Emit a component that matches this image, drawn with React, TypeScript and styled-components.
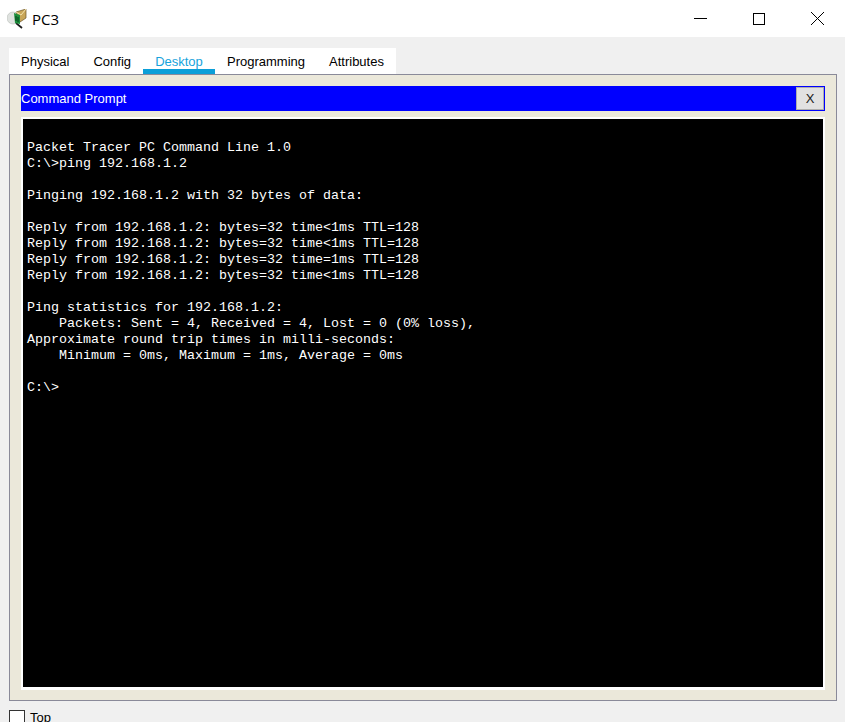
import { createGlobalStyle } from "styled-components";
import styled from "styled-components";

const Global = createGlobalStyle`
  html, body {
    margin: 0;
    padding: 0;
    height: 722px;
    overflow: hidden;
    background: #f0f0f0;
    font-family: "Liberation Sans", Arial, sans-serif;
  }
`;

const Window = styled.div`
  width: 845px;
  height: 722px;
  display: flex;
  flex-direction: column;
  overflow: hidden;
`;

const TitleBar = styled.div`
  height: 37px;
  background: #fff;
  display: flex;
  align-items: center;
  flex-shrink: 0;
  padding-left: 7px;
`;

const TitleText = styled.span`
  font-family: "Open Sans", "Noto Sans", sans-serif;
  font-size: 15px;
  color: #000;
  margin-left: 5px;
`;

const WindowButtons = styled.div`
  margin-left: auto;
  margin-right: -2px;
  display: flex;
`;

const WindowButton = styled.div`
  width: 58.5px;
  height: 37px;
  display: flex;
  align-items: center;
  justify-content: center;
`;

const Body = styled.div`
  flex: 1;
  padding: 11px 8px 0 9px;
  display: flex;
  flex-direction: column;
`;

const Tabs = styled.div`
  align-self: flex-start;
  height: 26px;
  background: #fff;
  display: flex;
`;

const Tab = styled.div<{ $active?: boolean }>`
  height: 26px;
  box-sizing: border-box;
  padding: 5px 12px 0;
  font-size: 13px;
  line-height: 17px;
  min-width: ${(p) => (p.$active ? "72px" : "auto")};
  text-align: center;
  color: ${(p) => (p.$active ? "#17a3dc" : "#000")};
  border-bottom: ${(p) => (p.$active ? "5px solid #0b9fd8" : "none")};
`;

const Panel = styled.div`
  height: 627px;
  box-sizing: border-box;
  border: 1px solid #8a8a99;
  background: #ebe8da;
  padding: 11px 11px 10px 11px;
  display: flex;
  flex-direction: column;
`;

const PromptHeader = styled.div`
  height: 25px;
  background: #0000ff;
  display: flex;
  align-items: center;
  justify-content: space-between;
  padding: 0 1px 0 0;
  flex-shrink: 0;
`;

const PromptTitle = styled.span`
  color: #fff;
  font-size: 13px;
`;

const CloseButton = styled.div`
  width: 28px;
  height: 23px;
  box-sizing: border-box;
  background: #e1e1e1;
  border: 1px solid #adadad;
  display: flex;
  align-items: center;
  justify-content: center;
  font-size: 13px;
  color: #1a1a1a;
`;

const Terminal = styled.div`
  margin-top: 6px;
  flex: 1;
  box-sizing: border-box;
  border: 2px solid #fff;
  border-bottom-width: 3px;
  background: #000;
  padding: 21px 0 0 4px;
`;

const Output = styled.pre`
  margin: 0;
  color: #fff;
  font-family: "Liberation Mono", "Courier New", monospace;
  font-size: 13.33px;
  line-height: 16px;
`;

const Footer = styled.div`
  display: flex;
  align-items: flex-start;
  margin-top: 9px;
  gap: 5px;
`;

const Check = styled.div`
  width: 16px;
  height: 16px;
  box-sizing: border-box;
  border: 1px solid #333;
  background: #fff;
`;

const FooterLabel = styled.span`
  font-size: 13px;
  line-height: 15px;
  color: #000;
`;

const output = `Packet Tracer PC Command Line 1.0
C:\\>ping 192.168.1.2

Pinging 192.168.1.2 with 32 bytes of data:

Reply from 192.168.1.2: bytes=32 time<1ms TTL=128
Reply from 192.168.1.2: bytes=32 time<1ms TTL=128
Reply from 192.168.1.2: bytes=32 time=1ms TTL=128
Reply from 192.168.1.2: bytes=32 time<1ms TTL=128

Ping statistics for 192.168.1.2:
    Packets: Sent = 4, Received = 4, Lost = 0 (0% loss),
Approximate round trip times in milli-seconds:
    Minimum = 0ms, Maximum = 1ms, Average = 0ms

C:\\>`;

function PcIcon() {
  return (
    <svg width="20" height="20" viewBox="0 0 20 20">
      <circle cx="6" cy="9" r="6" fill="#dfe2df" stroke="#b9bdb9" strokeWidth="0.6" />
      <path d="M9 14l6 5" stroke="#1c1c1c" strokeWidth="1.7" />
      <path d="M9 3l10-3v9l-6 4z" fill="#c9a659" stroke="#6b5426" strokeWidth="0.7" />
      <path d="M9 3l5 3 5-6" fill="none" stroke="#f3e2ad" strokeWidth="1" />
      <path d="M7 4l6 2v9l-5-1z" fill="#1d8f3c" />
      <path d="M9 7v5M11 8v5" stroke="#07401a" strokeWidth="1" />
    </svg>
  );
}

export default function App() {
  return (
    <Window>
      <Global />
      <TitleBar>
        <PcIcon />
        <TitleText>PC3</TitleText>
        <WindowButtons>
          <WindowButton>
            <svg width="13" height="13" viewBox="0 0 13 13">
              <path d="M0 6.5h13" stroke="#000" strokeWidth="1" />
            </svg>
          </WindowButton>
          <WindowButton>
            <svg width="12" height="12" viewBox="0 0 12 12">
              <rect x="0.5" y="0.5" width="11" height="11" fill="none" stroke="#000" strokeWidth="1" />
            </svg>
          </WindowButton>
          <WindowButton>
            <svg width="13" height="13" viewBox="0 0 13 13">
              <path d="M0 0l13 13M13 0L0 13" stroke="#000" strokeWidth="1" />
            </svg>
          </WindowButton>
        </WindowButtons>
      </TitleBar>
      <Body>
        <Tabs>
          <Tab>Physical</Tab>
          <Tab>Config</Tab>
          <Tab $active>Desktop</Tab>
          <Tab>Programming</Tab>
          <Tab>Attributes</Tab>
        </Tabs>
        <Panel>
          <PromptHeader>
            <PromptTitle>Command Prompt</PromptTitle>
            <CloseButton>X</CloseButton>
          </PromptHeader>
          <Terminal>
            <Output>{output}</Output>
          </Terminal>
        </Panel>
        <Footer>
          <Check />
          <FooterLabel>Top</FooterLabel>
        </Footer>
      </Body>
    </Window>
  );
}
